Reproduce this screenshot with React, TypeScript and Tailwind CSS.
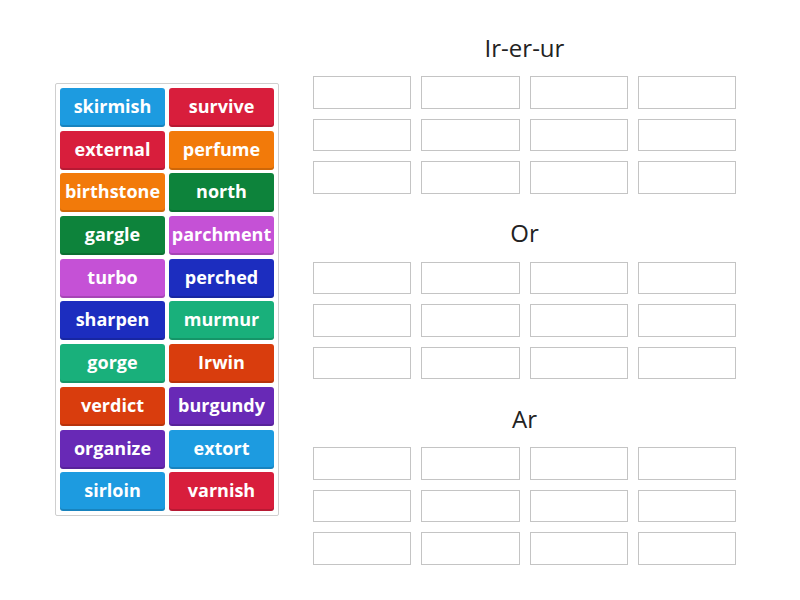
import React from "react";

const C = {
  blue: "bg-[#1d9be0]",
  red: "bg-[#d81e3c]",
  orange: "bg-[#f27a0a]",
  green: "bg-[#0d833b]",
  magenta: "bg-[#c551d6]",
  navy: "bg-[#1c2dbf]",
  teal: "bg-[#19b07b]",
  rust: "bg-[#d93d0d]",
  purple: "bg-[#6829b6]",
};

const tiles: [string, string][] = [
  ["skirmish", C.blue],
  ["survive", C.red],
  ["external", C.red],
  ["perfume", C.orange],
  ["birthstone", C.orange],
  ["north", C.green],
  ["gargle", C.green],
  ["parchment", C.magenta],
  ["turbo", C.magenta],
  ["perched", C.navy],
  ["sharpen", C.navy],
  ["murmur", C.teal],
  ["gorge", C.teal],
  ["Irwin", C.rust],
  ["verdict", C.rust],
  ["burgundy", C.purple],
  ["organize", C.purple],
  ["extort", C.blue],
  ["sirloin", C.blue],
  ["varnish", C.red],
];

function Section({ title }: { title: string }) {
  return (
    <div className="flex flex-col">
      <div className="h-[62px] pt-[5px] flex items-center justify-center text-[24px] text-[#222]">
        {title}
      </div>
      <div className="grid grid-cols-4 gap-x-[10px] gap-y-[10px]">
        {Array.from({ length: 12 }).map((_, i) => (
          <div
            key={i}
            className="h-[32.5px] border border-[#c4c4c4] bg-white"
          />
        ))}
      </div>
    </div>
  );
}

export default function App() {
  return (
    <div
      className="w-[800px] h-[600px] bg-white relative"
      style={{ fontFamily: '"Open Sans", "Noto Sans", sans-serif' }}
    >
      <div className="flex items-start">
        <div className="ml-[55px] mt-[83px] w-[224px] border border-[#cfcfcf] rounded-[2px] p-[4px] grid grid-cols-2 gap-x-[4px] gap-y-[3.7px]">
          {tiles.map(([t, c]) => (
            <div
              key={t}
              className={`${c} h-[39px] rounded-[3px] flex items-center justify-center text-white font-bold text-[18px] leading-none shadow-[inset_0_-2px_0_rgba(0,0,0,0.15)]`}
            >
              <span className="-mt-[3px]">{t}</span>
            </div>
          ))}
        </div>
        <div className="ml-[34px] mt-[14px] w-[423px] flex flex-col gap-[6px]">
          <Section title="Ir-er-ur" />
          <Section title="Or" />
          <Section title="Ar" />
        </div>
      </div>
    </div>
  );
}
